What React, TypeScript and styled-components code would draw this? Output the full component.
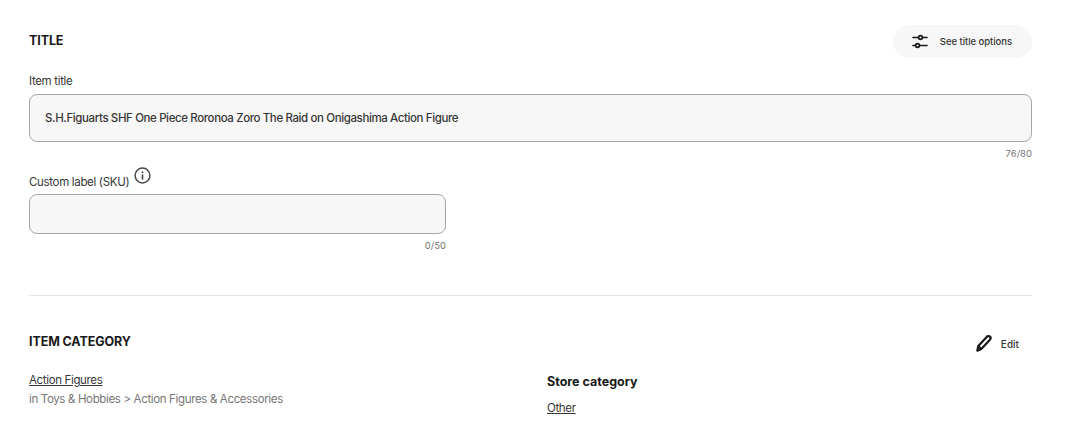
import React from "react";
import styled, { createGlobalStyle } from "styled-components";

const Global = createGlobalStyle`
  html, body { margin: 0; padding: 0; background: #fff; }
  body { font-family: "Inter", "Liberation Sans", sans-serif; color: #191919; }
`;

const Page = styled.main`
  width: 1003px;
  height: 432px;
  margin-left: 29px;
  padding-top: 25px;
  box-sizing: border-box;
  overflow: hidden;
`;

const Header = styled.div`
  display: flex;
  align-items: center;
  justify-content: space-between;
`;

const Heading = styled.h2<{ $lift?: number }>`
  margin: ${(p) => -(p.$lift ?? 0)}px 0 0;
  font-size: 12.5px;
  font-weight: 700;
  letter-spacing: -0.1px;
  color: #191919;
`;

const PillButton = styled.button`
  display: flex;
  align-items: center;
  gap: 12px;
  height: 33px;
  padding: 0 20px 0 19px;
  border: 0;
  border-radius: 17px;
  background: #f7f7f7;
  font: 500 9.5px "Inter", sans-serif;
  letter-spacing: -0.05px;
  color: #363636;
`;

const EditButton = styled.button`
  display: flex;
  align-items: center;
  gap: 8px;
  height: 33px;
  padding: 2px 13px 0 0;
  border: 0;
  background: none;
  font: 500 10px "Inter", sans-serif;
  color: #363636;
`;

const EditText = styled.span`
  margin-top: 2px;
`;

const Label = styled.label`
  display: flex;
  align-items: flex-end;
  gap: 5px;
  font-size: 11.5px;
  letter-spacing: -0.33px;
  color: #363636;
  line-height: 16px;
`;

const Field = styled.div<{ $width: number; $height: number }>`
  box-sizing: border-box;
  width: ${(p) => p.$width}px;
  height: ${(p) => p.$height}px;
  padding: 0 15px;
  display: flex;
  align-items: center;
  background: #f7f7f7;
  border: 1px solid #a6a6a6;
  border-radius: 8px;
  font-size: 11.5px;
  letter-spacing: -0.39px;
  font-weight: 500;
  color: #363636;
`;

const Counter = styled.div<{ $width: number }>`
  width: ${(p) => p.$width}px;
  text-align: right;
  font-size: 9.5px;
  line-height: 12px;
  color: #767676;
  margin-top: 6px;
`;

const TitleBlock = styled.div`
  margin-top: 15px;
  display: flex;
  flex-direction: column;
  gap: 5px;
`;

const SkuBlock = styled.div`
  margin-top: 7px;
  display: flex;
  flex-direction: column;
  gap: 4px;
`;

const Group = styled.div``;

const InfoWrap = styled.span`
  display: flex;
  margin-bottom: 6px;
`;

const Divider = styled.hr`
  margin: 43px 0 29px;
  border: 0;
  border-top: 1px solid #e5e5e5;
`;

const Columns = styled.div`
  display: grid;
  grid-template-columns: 518px 1fr;
  margin-top: 14px;
`;

const Column = styled.div`
  display: flex;
  flex-direction: column;
`;

const Crumb = styled.a`
  font-size: 11.5px;
  letter-spacing: -0.35px;
  line-height: 16px;
  color: #363636;
  text-decoration: underline;
`;

const Path = styled.div`
  margin-top: 3px;
  font-size: 11.5px;
  letter-spacing: -0.35px;
  line-height: 16px;
  color: #767676;
`;

const SubHeading = styled.h3`
  margin: 2px 0 10px;
  font-size: 12.5px;
  line-height: 16px;
  font-weight: 700;
  color: #191919;
`;

const SlidersIcon = () => (
  <svg width="16" height="16" viewBox="0 0 16 16" fill="none" stroke="#191919" strokeWidth="1.6" strokeLinecap="round">
    <path d="M1 3.5h5.3M10.7 3.5H15M1 11.5h2.3M7.7 11.5H15" />
    <circle cx="8.5" cy="3.5" r="1.9" fill="#f7f7f7" strokeWidth="1.7" />
    <circle cx="5.5" cy="11.5" r="1.9" fill="#f7f7f7" strokeWidth="1.7" />
  </svg>
);

const InfoIcon = () => (
  <svg width="17" height="17" viewBox="0 0 17 17" fill="none" stroke="#4a4a4a" strokeWidth="1.5">
    <circle cx="8.5" cy="8.5" r="7.4" />
    <path d="M8.5 8v4" strokeWidth="1.7" strokeLinecap="round" />
    <circle cx="8.5" cy="5.3" r="1" fill="#4a4a4a" stroke="none" />
  </svg>
);

const PencilIcon = () => (
  <svg width="17" height="18" viewBox="0 0 17 18" fill="none" stroke="#191919" strokeWidth="2.2" strokeLinejoin="round">
    <path d="M1.3 16.7l1-4.6 8.4-9.2c1-1 2.4-1.2 3.3-.3.9.9.7 2.3-.3 3.3l-8.4 9.2-4 1.6z" />
    <path d="M2.3 12.1l3 3" />
  </svg>
);

export default function App() {
  return (
    <Page>
      <Global />
      <Header>
        <Heading $lift={2}>TITLE</Heading>
        <PillButton><SlidersIcon />See title options</PillButton>
      </Header>
      <TitleBlock>
        <Label>Item title</Label>
        <Group>
          <Field $width={1003} $height={48}>S.H.Figuarts SHF One Piece Roronoa Zoro The Raid on Onigashima Action Figure</Field>
          <Counter $width={1003}>76/80</Counter>
        </Group>
      </TitleBlock>
      <SkuBlock>
        <Label>Custom label (SKU) <InfoWrap><InfoIcon /></InfoWrap></Label>
        <Group>
          <Field $width={417} $height={40} />
          <Counter $width={417}>0/50</Counter>
        </Group>
      </SkuBlock>
      <Divider />
      <Header>
        <Heading>ITEM CATEGORY</Heading>
        <EditButton><PencilIcon /><EditText>Edit</EditText></EditButton>
      </Header>
      <Columns>
        <Column>
          <Crumb>Action Figures</Crumb>
          <Path>in Toys &amp; Hobbies &gt; Action Figures &amp; Accessories</Path>
        </Column>
        <Column>
          <SubHeading>Store category</SubHeading>
          <Crumb>Other</Crumb>
        </Column>
      </Columns>
    </Page>
  );
}
